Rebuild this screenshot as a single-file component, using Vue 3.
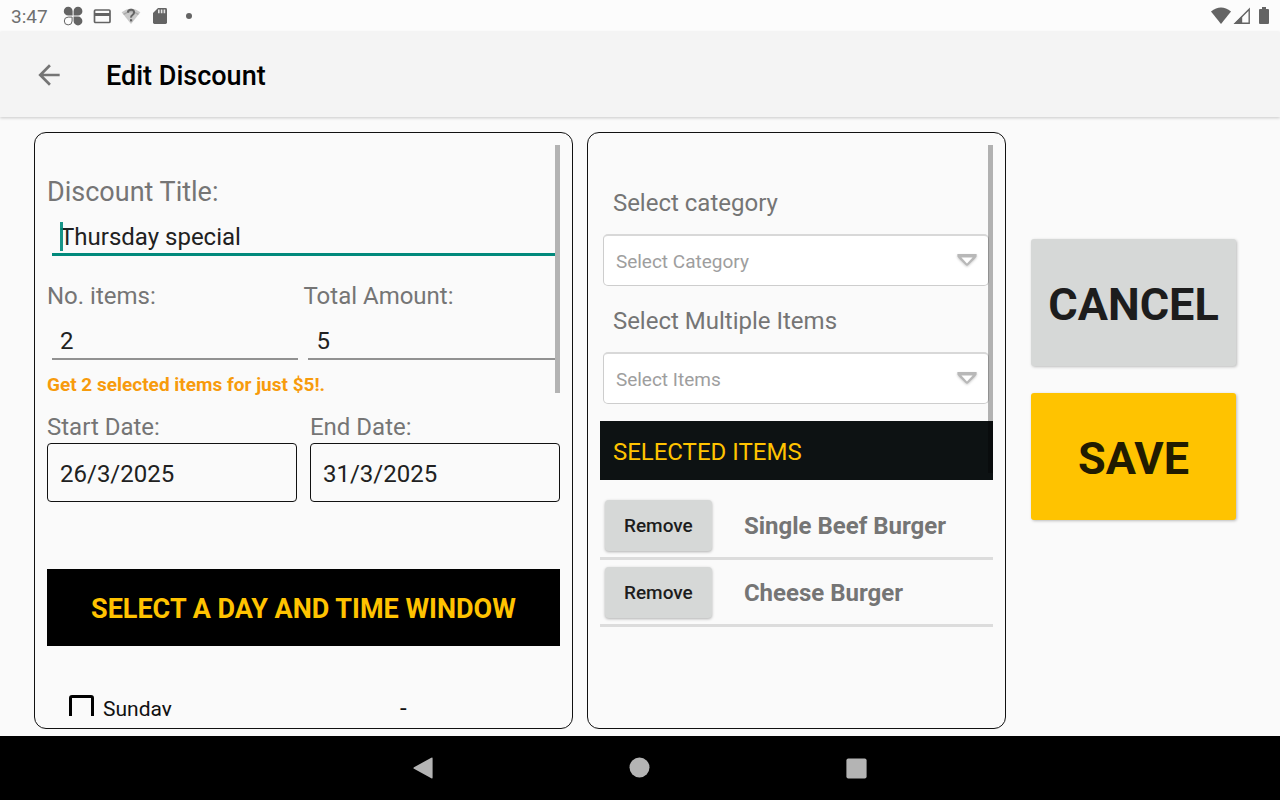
<template>
  <div class="screen">
    <div class="status-bar">
      <span class="clock">3:47</span>
      <div class="status-icons">
        <svg class="icon" viewBox="0 0 20 20" aria-hidden="true">
          <path d="M9.6 9.6H5.2A4.4 4.4 0 1 1 9.6 5.2zM10.6 9.6V5.2A4.4 4.4 0 1 1 15 9.6zM10.6 10.6H15A4.4 4.4 0 1 1 10.6 15z" fill="#646464" />
          <path d="M9.1 11.1H5.2A3.9 3.9 0 1 0 9.1 15z" fill="none" stroke="#646464" stroke-width="1" />
        </svg>
        <svg class="icon" viewBox="0 0 20 20" aria-hidden="true">
          <rect x="2.5" y="4" width="15.5" height="12.5" rx="1" fill="none" stroke="#646464" stroke-width="1.7" />
          <path d="M2 7h16v3H2z" fill="#646464" />
        </svg>
        <svg class="icon" viewBox="0 0 20 20" aria-hidden="true">
          <path d="M.6 6.2Q10-1 19.4 6.2L10 18z" fill="#cacaca" />
          <path d="M2.6 8.4Q10 2.8 17.4 8.4" fill="none" stroke="#aaa" stroke-width="1.4" />
          <path d="M6.9 6.6Q7 3.8 10.1 3.8T13.1 6.6Q13.1 8 11.5 9T10.1 11.6" fill="none" stroke="#646464" stroke-width="2" />
          <path d="M9 13.2h2.2v2.2H9z" fill="#646464" />
        </svg>
        <svg class="icon" viewBox="0 0 20 20" aria-hidden="true">
          <path d="M8 2h7.6Q17 2 17 3.4v13.2Q17 18 15.6 18H4.4Q3 18 3 16.6V7z" fill="#646464" />
          <path d="M8 3.6h1.6v3.6H8zM10.8 3.6h1.6v3.6h-1.6zM13.6 3.6h1.6v3.6h-1.6z" fill="#e4e4e4" />
        </svg>
        <svg class="icon" viewBox="0 0 20 20" aria-hidden="true">
          <circle cx="10" cy="10" r="3" fill="#646464" />
        </svg>
      </div>
      <div class="system-icons">
        <svg width="20" height="18" viewBox="0 0 20 18" aria-hidden="true">
          <path d="M0 4.4Q10-3.2 20 4.4L10 17z" fill="#646464" />
        </svg>
        <svg width="18" height="18" viewBox="0 0 18 18" aria-hidden="true">
          <path d="M16.2 2.2V16.2H2.2z" fill="none" stroke="#646464" stroke-width="1.4" />
          <path d="M1 17L9.2 8.8V17z" fill="#646464" />
        </svg>
        <svg class="battery" width="10" height="18" viewBox="0 0 10 18" aria-hidden="true">
          <path d="M3 0h4v2h2q1 0 1 1v13q0 1-1 1H1q-1 0-1-1V3q0-1 1-1h2z" fill="#646464" />
        </svg>
      </div>
    </div>

    <header class="app-bar">
      <button type="button" class="back" aria-label="Back">
        <svg width="32" height="32" viewBox="0 0 24 24" aria-hidden="true">
          <path d="M20 11H7.83l5.59-5.59L12 4l-8 8 8 8 1.41-1.41L7.83 13H20z" fill="#757575" />
        </svg>
      </button>
      <h1>Edit Discount</h1>
    </header>

    <main class="content">
      <section class="card">
        <div class="scroller">
          <div class="field title-field">
            <label for="title" class="title-label">Discount Title:</label>
            <div class="title-input">
              <input id="title" v-model="title" type="text" class="line-input focused" />
              <span class="caret"></span>
            </div>
          </div>

          <div class="amounts">
            <div class="field">
              <label for="count">No. items:</label>
              <input id="count" v-model="count" type="text" class="line-input" />
            </div>
            <div class="field">
              <label for="amount">Total Amount:</label>
              <input id="amount" v-model="amount" type="text" class="line-input" />
            </div>
          </div>

          <p class="summary">Get {{ count }} selected items for just ${{ amount }}!.</p>

          <div class="dates">
            <div class="field">
              <label for="start">Start Date:</label>
              <input id="start" v-model="startDate" type="text" class="date-input" />
            </div>
            <div class="field">
              <label for="end">End Date:</label>
              <input id="end" v-model="endDate" type="text" class="date-input" />
            </div>
          </div>

          <button type="button" class="window-button">SELECT A DAY AND TIME WINDOW</button>

          <div v-for="day in days" :key="day.name" class="day-row">
            <label class="day">
              <input v-model="day.checked" type="checkbox" />
              <span class="day-name">{{ day.name }}</span>
            </label>
            <span class="day-range">-</span>
          </div>
        </div>
        <span class="thumb thumb-left"></span>
      </section>

      <section class="card">
        <div class="scroller">
          <div class="picker first-picker">
            <label for="category">Select category</label>
            <div class="select-box">
              <select id="category" v-model="category">
                <option value="">Select Category</option>
              </select>
              <svg class="arrow" width="22" height="16" viewBox="0 0 22 16" aria-hidden="true">
                <path d="M1.4 2h19.2v2.4l-2 2.6-6.2 6q-1.4 1.4-2.8 0L3.4 7l-2-2.6z" fill="#b8b8b8" />
                <path d="M5.4 5.6h11.2L11 11.4z" fill="#fff" />
              </svg>
            </div>
          </div>
          <div class="picker">
            <label for="items">Select Multiple Items</label>
            <div class="select-box">
              <select id="items" v-model="item">
                <option value="">Select Items</option>
              </select>
              <svg class="arrow" width="22" height="16" viewBox="0 0 22 16" aria-hidden="true">
                <path d="M1.4 2h19.2v2.4l-2 2.6-6.2 6q-1.4 1.4-2.8 0L3.4 7l-2-2.6z" fill="#b8b8b8" />
                <path d="M5.4 5.6h11.2L11 11.4z" fill="#fff" />
              </svg>
            </div>
          </div>

          <h2 class="selected-heading">SELECTED ITEMS</h2>
          <ul class="selected">
            <li v-for="(name, i) in selected" :key="name">
              <button type="button" class="remove" @click="selected.splice(i, 1)">Remove</button>
              <span class="item-name">{{ name }}</span>
            </li>
          </ul>
        </div>
        <span class="thumb thumb-right"></span>
      </section>

      <div class="actions">
        <button type="button" class="action cancel">CANCEL</button>
        <button type="button" class="action save">SAVE</button>
      </div>
    </main>

    <nav class="nav-bar">
      <button type="button" aria-label="Back">
        <svg width="24" height="24" viewBox="0 0 24 24" aria-hidden="true">
          <path d="M19.3 1.8Q20.6 1 20.6 2.4v19.2q0 1.4-1.3.6L2 12.8q-1.2-.8 0-1.6z" fill="#b4b4b4" />
        </svg>
      </button>
      <button type="button" aria-label="Home">
        <svg width="24" height="24" viewBox="0 0 24 24" aria-hidden="true">
          <circle cx="11.5" cy="11.5" r="10" fill="#b4b4b4" />
        </svg>
      </button>
      <button type="button" aria-label="Recent apps">
        <svg width="24" height="24" viewBox="0 0 24 24" aria-hidden="true">
          <rect x="2.4" y="2.4" width="20.2" height="20.2" rx="2" fill="#b4b4b4" />
        </svg>
      </button>
    </nav>
  </div>
</template>

<script setup>
import { ref } from 'vue'

const title = ref('Thursday special')
const count = ref('2')
const amount = ref('5')
const startDate = ref('26/3/2025')
const endDate = ref('31/3/2025')
const category = ref('')
const item = ref('')

const selected = ref(['Single Beef Burger', 'Cheese Burger'])
const days = ref([{ name: 'Sunday', checked: false }])
</script>

<style>
body {
  margin: 0;
  background: #fafafa;
}
</style>

<style scoped>
.screen {
  display: flex;
  flex-direction: column;
  height: 100vh;
  background: #fafafa;
  color: #212121;
  font-family: Roboto, sans-serif;
  font-size: 24px;
}

.screen *,
.screen *::before {
  box-sizing: border-box;
}

button,
input,
select {
  margin: 0;
  padding: 0;
  border: 0;
  border-radius: 0;
  outline: 0;
  background: none;
  color: inherit;
  font: inherit;
}

svg {
  display: block;
}

/* Status and app bars */

.status-bar {
  display: flex;
  align-items: center;
  flex: none;
  height: 32px;
  padding: 0 11px;
  background: #fcfcfc;
}

.clock {
  color: #707070;
  font-size: 19px;
}

.status-icons {
  display: flex;
  gap: 9px;
  margin-left: 15px;
}

.icon {
  width: 20px;
  height: 20px;
}

.system-icons {
  display: flex;
  align-items: center;
  gap: 2px;
  margin-left: auto;
}

.battery {
  margin-left: 6px;
}

.app-bar {
  display: flex;
  align-items: center;
  flex: none;
  gap: 41px;
  height: 85px;
  padding: 0 33px;
  background: #f4f4f4;
  box-shadow: 0 1px 3px rgba(0, 0, 0, 0.2);
}

h1 {
  margin: 0;
  padding-top: 2px;
  color: #000;
  font-size: 27px;
  font-weight: 500;
}

/* Cards */

.content {
  display: grid;
  flex: 1;
  grid-template-columns: minmax(0, 9fr) minmax(0, 7fr) 216px;
  gap: 14px;
  min-height: 0;
  padding: 15px 44px 7px 34px;
}

.card {
  position: relative;
  min-height: 0;
  padding: 12px;
  border: 1px solid #111;
  border-radius: 12px;
}

.scroller {
  height: 100%;
  overflow-y: auto;
  scrollbar-width: none;
}

.thumb {
  position: absolute;
  top: 12px;
  right: 12px;
  width: 5px;
  background: #b3b3b3;
}

.thumb-left {
  height: 248px;
}

.thumb-right {
  height: 328px;
  background: rgba(0, 0, 0, 0.29);
}

/* Discount form */

.field {
  display: flex;
  flex-direction: column;
  flex: 1;
  min-width: 0;
}

label {
  color: #757575;
  line-height: 32px;
}

.title-field {
  padding-top: 31px;
}

.title-label {
  font-size: 27px;
}

.title-input {
  position: relative;
  display: flex;
}

.line-input {
  flex: 1;
  min-width: 0;
  height: 48px;
  margin: 0 5px;
  padding: 12px 8px 0;
  border-bottom: 2px solid #919191;
}

.focused {
  border-bottom: 3px solid #00897b;
}

.caret {
  position: absolute;
  top: 14px;
  left: 13px;
  width: 3px;
  height: 29px;
  background: rgba(0, 137, 123, 0.9);
}

.amounts {
  display: flex;
  margin-top: 24px;
}

.amounts .line-input {
  flex: none;
}

.summary {
  margin: 13px 0 14px;
  color: #f79b0c;
  font-size: 19px;
  font-weight: 700;
  line-height: 24px;
}

.dates {
  display: flex;
  gap: 13px;
}

.date-input {
  width: 100%;
  height: 59px;
  padding: 2px 12px 0;
  border: 1px solid #111;
  border-radius: 4px;
}

.window-button {
  width: 100%;
  height: 77px;
  margin: 67px 0 41px;
  padding-top: 2px;
  background: #000;
  color: #ffc300;
  font-size: 27px;
  font-weight: 700;
}

.day-row {
  display: flex;
  align-items: center;
  height: 42px;
  color: #111;
  font-size: 21px;
}

.day {
  display: flex;
  align-items: center;
  flex: 1;
  gap: 9px;
  padding-left: 22px;
  color: inherit;
}

.day input {
  appearance: none;
  width: 25px;
  height: 27px;
  border: 3px solid #000;
  border-radius: 3px;
}

.day input:checked {
  background: #000;
}

.day-name {
  padding-top: 2px;
}

.day-range {
  width: 160px;
  font-size: 24px;
}

/* Item pickers */

.picker {
  padding: 19px 4px 0 3px;
}

.first-picker {
  padding-top: 42px;
}

.picker label {
  display: block;
  margin-bottom: 15px;
  padding-left: 10px;
}

.select-box {
  position: relative;
}

select {
  appearance: none;
  display: block;
  width: 100%;
  height: 52px;
  padding: 2px 40px 0 12px;
  border: 1px solid #cdcdcd;
  border-top: 2px solid #d8d8d8;
  border-radius: 5px;
  background: #fff;
  color: #9e9e9e;
  font-size: 19px;
}

.arrow {
  position: absolute;
  top: 18px;
  right: 11px;
  filter: drop-shadow(0 1px 1px rgba(0, 0, 0, 0.2));
}

.selected-heading {
  margin: 17px 0 13px;
  padding: 4px 13px 0;
  background: #0d1213;
  color: #ffc300;
  font-size: 24px;
  font-weight: 400;
  line-height: 55px;
}

.selected {
  margin: 0;
  padding: 0;
  list-style: none;
}

.selected li {
  display: flex;
  align-items: center;
  gap: 32px;
  height: 67px;
  padding-left: 5px;
  border-bottom: 3px solid #dcdcdc;
  color: #757575;
  font-weight: 700;
}

.item-name {
  padding-top: 2px;
}

.remove {
  width: 107px;
  height: 51px;
  border-radius: 4px;
  background: #d6d8d7;
  box-shadow: 0 1px 3px rgba(0, 0, 0, 0.3);
  color: #1d1d1d;
  font-size: 19px;
  font-weight: 500;
}

/* Actions */

.actions {
  display: flex;
  flex-direction: column;
  gap: 27px;
  padding: 107px 0 0 11px;
}

.action {
  height: 127px;
  padding-top: 4px;
  border-radius: 3px;
  box-shadow: 1px 1px 3px rgba(0, 0, 0, 0.25);
  font-size: 45px;
  font-weight: 700;
}

.cancel {
  background: #d6d8d7;
  color: #1d1d1d;
}

.save {
  background: #ffc300;
  color: #211b00;
}

.nav-bar {
  display: flex;
  align-items: center;
  justify-content: center;
  flex: none;
  gap: 192px;
  height: 64px;
  background: #000;
}
</style>
